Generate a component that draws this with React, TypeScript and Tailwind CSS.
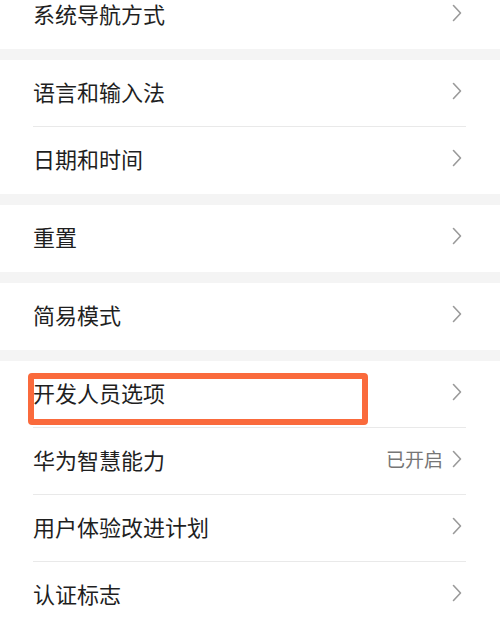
import React from "react";

type Item = { label: string; value?: string; highlight?: boolean };

const groups: Item[][] = [
  [{ label: "系统导航方式" }],
  [{ label: "语言和输入法" }, { label: "日期和时间" }],
  [{ label: "重置" }],
  [{ label: "简易模式" }],
  [
    { label: "开发人员选项", highlight: true },
    { label: "华为智慧能力", value: "已开启" },
    { label: "用户体验改进计划" },
    { label: "认证标志" },
  ],
];

function Chevron() {
  return (
    <svg width="10" height="18" viewBox="0 0 10 18" fill="none" className="shrink-0">
      <path d="M1.5 1.5 L8.5 9 L1.5 16.5" stroke="#9a9a9a" strokeWidth="1.6" strokeLinecap="round" strokeLinejoin="round" />
    </svg>
  );
}

function Row({ item, last }: { item: Item; last: boolean }) {
  return (
    <div className="relative h-[67px]">
      <div className="flex h-full items-center justify-between pb-[6px] pr-[4px]">
        <span className="text-[22px] leading-none text-[#1f1f1f]">{item.label}</span>
        <div className="flex items-center gap-[9px]">
          {item.value && <span className="text-[19px] leading-none text-[#767676]">{item.value}</span>}
          <Chevron />
        </div>
      </div>
      {!last && <div className="absolute bottom-0 left-0 right-0 h-px bg-[#e9e9e9]" />}
      {item.highlight && (
        <div className="pointer-events-none absolute left-[-5px] top-[12px] h-[52px] w-[340px] rounded-[4px] border-[6px] border-[#fa6a3c]" />
      )}
    </div>
  );
}

export default function App() {
  return (
    <div
      className="h-[639px] w-[500px] overflow-hidden bg-white"
      style={{ fontFamily: '"Noto Sans CJK SC", "Noto Sans", sans-serif' }}
    >
      <div className="-mt-[18px]">
        {groups.map((g, gi) => (
          <div key={gi}>
            {gi > 0 && <div className="h-[11px] bg-[#f4f4f4]" />}
            <div className="bg-white pl-[33px] pr-[34px]">
              {g.map((item, i) => (
                <Row key={item.label} item={item} last={i === g.length - 1} />
              ))}
            </div>
          </div>
        ))}
      </div>
    </div>
  );
}
